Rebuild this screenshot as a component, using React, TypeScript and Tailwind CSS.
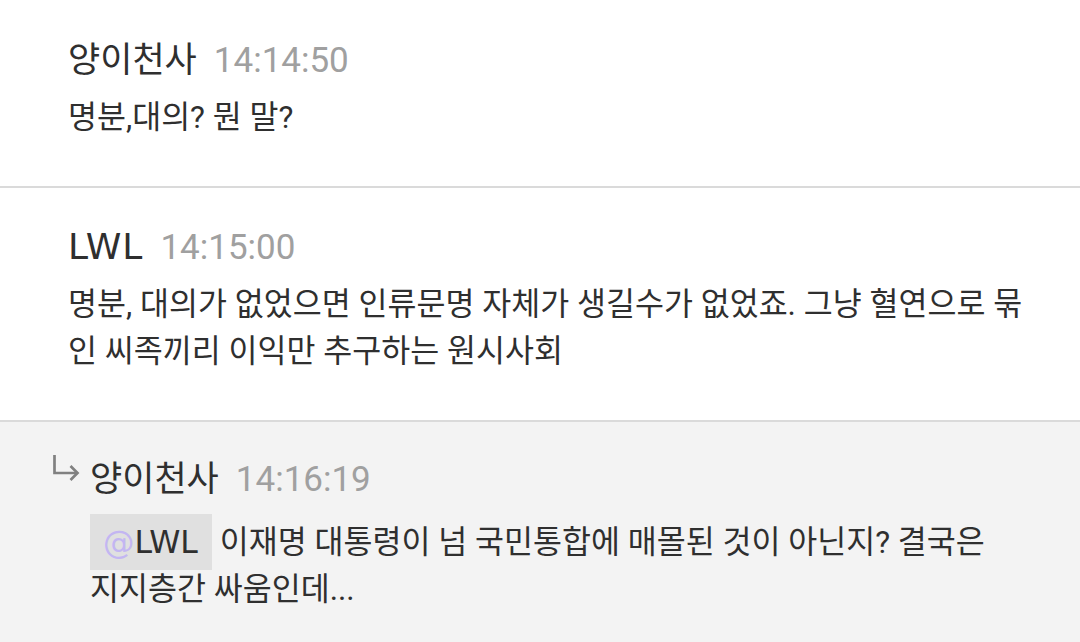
import React from 'react'

const BODY = { fontFamily: 'Roboto, "Noto Sans CJK KR", sans-serif' }
const WIDE = { fontFamily: '"DejaVu Sans", "Noto Sans CJK KR", sans-serif' }

function ReplyArrow() {
  return (
    <svg width="30" height="30" viewBox="0 0 30 30" className="-mt-[4px] -mr-[2px] shrink-0">
      <path d="M4.5 3 V21 H27" fill="none" stroke="#808080" strokeWidth="2.7" />
      <path d="M20.5 14 L27.5 21 L20.5 28" fill="none" stroke="#808080" strokeWidth="2.7" />
    </svg>
  )
}

function Header({ name, time, spaced }: { name: string; time: string; spaced?: boolean }) {
  return (
    <div className="flex items-baseline leading-[47px]">
      <span className={spaced ? 'text-[36px] tracking-[1px] text-[#2f2f2f]' : 'text-[35px] text-[#2f2f2f]'} style={WIDE}>
        {name}
      </span>
      <span className="ml-[17px] text-[35px] text-[#a0a0a0]">{time}</span>
    </div>
  )
}

export default function App() {
  return (
    <div className="w-[1080px] h-[642px] overflow-hidden bg-white" style={BODY}>
      {/* first message, partly scrolled */}
      <div className="pl-[68px] pr-[36px] pt-[37px] pb-[45px] border-b-2 border-[#dadada]">
        <Header name="양이천사" time="14:14:50" />
        <p className="mt-[10px] text-[31.5px] leading-[47px] text-[#2f2f2f]">명분,대의? 뭔 말?</p>
      </div>

      <div className="pl-[68px] pr-[36px] pt-[35px] pb-[45px] border-b-2 border-[#dadada]">
        <Header name="LWL" time="14:15:00" spaced />
        <p className="mt-[10px] text-[31.5px] leading-[47px] text-[#2f2f2f]">
          명분, 대의가 없었으면 인류문명 자체가 생길수가 없었죠. 그냥 혈연으로 묶인 씨족끼리 이익만 추구하는 원시사회
        </p>
      </div>

      {/* reply */}
      <div className="bg-[#f3f3f3] pl-[50px] pr-[70px] pt-[34px] pb-[40px]">
        <div className="flex items-start gap-[12px]">
          <ReplyArrow />
          <Header name="양이천사" time="14:16:19" />
        </div>
        <p className="ml-[40px] mt-[16px] text-[31.5px] leading-[47px] text-[#2f2f2f]">
          <span className="bg-[#e0e0e0] pl-[13px] pr-[14px] py-[10px]" style={WIDE}>
            <span className="text-[#c3b6f2]">@</span>LWL
          </span>{' '}
          이재명 대통령이 넘 국민통합에 매몰된 것이 아닌지? 결국은 지지층간 싸움인데...
        </p>
      </div>
    </div>
  )
}
